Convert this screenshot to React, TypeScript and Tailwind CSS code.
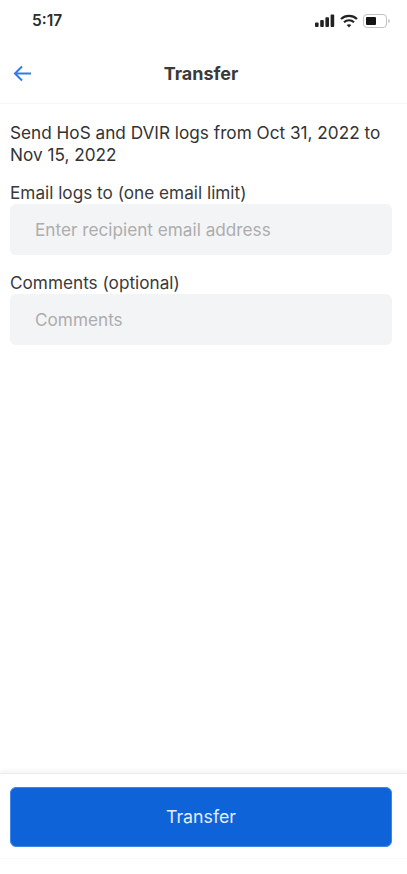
function StatusIcons() {
  return (
    <div className="flex items-center gap-[5px]">
      <svg width="20" height="14" viewBox="0 0 20 14" fill="#222222">
        <rect x="0" y="8.5" width="3.6" height="4.5" rx="0.9" />
        <rect x="5.2" y="6" width="3.6" height="7" rx="0.9" />
        <rect x="10.4" y="3.2" width="3.6" height="9.8" rx="0.9" />
        <rect x="15.6" y="0.5" width="3.6" height="12.5" rx="0.9" />
      </svg>
      <svg width="18" height="14" viewBox="0 0 18 14" fill="none" stroke="#222222" strokeWidth="2.2">
        <path d="M1 5C5.4 0.8 12.6 0.8 17 5" />
        <path d="M4 8.2C6.8 5.6 11.2 5.6 14 8.2" />
        <path d="M9 13.4L6.7 11C8 9.9 10 9.9 11.3 11Z" fill="#222222" stroke="none" />
      </svg>
      <div className="flex items-center">
        <div className="flex h-[14px] w-[24px] items-center rounded-[4px] border border-[#c2c2c2] p-[2px]">
          <div className="h-full w-[10px] rounded-[1px] bg-[#141414]" />
        </div>
        <div className="ml-px h-1 w-[2px] rounded-r-sm bg-[#cfcfcf]" />
      </div>
    </div>
  );
}

export default function App() {
  return (
    <div className="flex h-[874px] w-[407px] flex-col overflow-hidden bg-white font-['Inter',sans-serif] text-[#333333]">
      <div className="flex h-[41px] items-center justify-between pl-8 pr-[17px]">
        <span className="text-[15.5px] font-semibold text-[#2c2c2c]">5:17</span>
        <StatusIcons />
      </div>

      <div className="relative flex h-[63px] items-center justify-center border-b border-[#f6f6f6] pr-[5px] pt-[3px]">
        <svg
          className="absolute left-[13px] top-[24px]"
          width="19"
          height="17"
          viewBox="0 0 19 17"
          fill="none"
          stroke="#2f7be5"
          strokeWidth="2"
        >
          <path d="M18 8.5H2" />
          <path d="M9 1.5L2 8.5L9 15.5" />
        </svg>
        <h1 className="text-lg font-bold text-[#3a3a3a]">Transfer</h1>
      </div>

      <div className="flex grow flex-col pl-[10px] pr-[15px] pt-[18px]">
        <p className="text-[17.2px] leading-[22px] text-[#333333]">
          Send HoS and DVIR logs from Oct 31, 2022 to Nov 15, 2022
        </p>
        <label className="mt-4 text-[17.2px] leading-[22px] text-[#3a3a3a]">
          Email logs to (one email limit)
        </label>
        <div className="flex h-[51px] items-center rounded-md bg-[#f3f4f6] pl-[25px] text-[17.2px] text-[#adadad]">
          Enter recipient email address
        </div>
        <label className="mt-[17px] text-[17.2px] leading-[22px] text-[#3a3a3a]">
          Comments (optional)
        </label>
        <div className="flex h-[51px] items-center rounded-md bg-[#f3f4f6] pl-[25px] text-[17.2px] text-[#adadad]">
          Comments
        </div>
      </div>

      <div className="border-t border-[#ececec] pb-[11px] pl-[10px] pr-[15px] pt-[13px] shadow-[0_-3px_4px_rgba(0,0,0,0.04)]">
        <button className="flex h-[60px] w-full items-center justify-center rounded-md border border-[#3f84e6] bg-[#0f63d9] text-[17.8px] text-[#e3edfb]">
          Transfer
        </button>
      </div>
      <div className="h-[16px] border-t border-[#f8f8f8]" />
    </div>
  );
}
